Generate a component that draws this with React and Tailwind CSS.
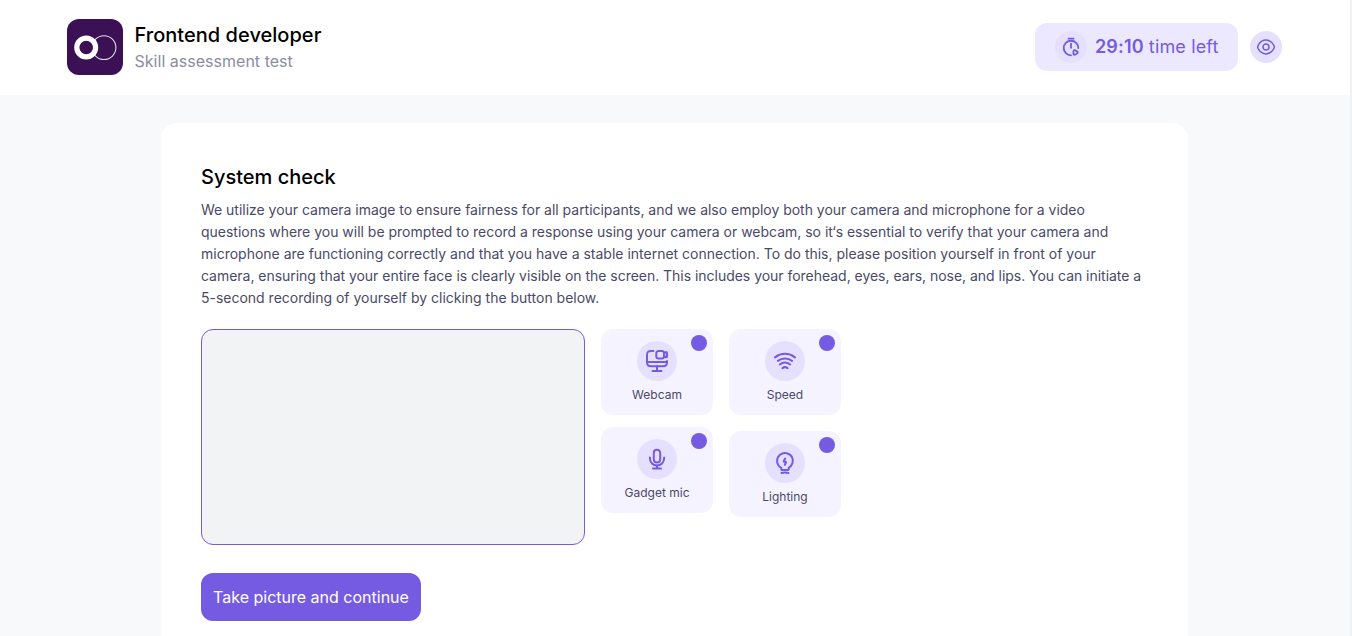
import React from "react";

const stroke = {
  fill: "none",
  stroke: "#755AE2",
  strokeWidth: 2,
  strokeLinecap: "round",
  strokeLinejoin: "round",
};

function Logo() {
  return (
    <svg className="size-14 shrink-0 rounded-xl" viewBox="0 0 56 56">
      <rect width="56" height="56" fill="#3B1054" />
      <circle cx="37" cy="28.6" r="11.9" fill="none" stroke="#E4DCE8" strokeWidth="1.1" />
      <circle cx="19.2" cy="28.5" r="9.4" fill="#3B1054" stroke="#fff" strokeWidth="5.2" />
    </svg>
  );
}

function TimerIcon() {
  return (
    <svg width="20" height="20" viewBox="0 0 24 24" {...stroke} strokeWidth="2.2">
      <path d="M12 8v5" />
      <path d="M12 22c-4.83 0-8.75-3.92-8.75-8.75S7.17 4.5 12 4.5s8.75 3.92 8.75 8.75" />
      <path d="M9 2h6" />
      <path d="M14.9 18.5v-1.16c0-1.43 1.02-2.02 2.26-1.3l1 .58 1 .58c1.24.71 1.24 1.88 0 2.6l-1 .58-1 .58c-1.24.71-2.26.13-2.26-1.3V18.5z" />
    </svg>
  );
}

function EyeIcon() {
  return (
    <svg width="20" height="20" viewBox="0 0 24 24" {...stroke} strokeWidth="1.8">
      <path d="M15.58 12c0 1.98-1.6 3.58-3.58 3.58S8.42 13.98 8.42 12s1.6-3.58 3.58-3.58 3.58 1.6 3.58 3.58z" />
      <path d="M12 20.27c3.53 0 6.82-2.08 9.11-5.68.9-1.41.9-3.78 0-5.19-2.29-3.6-5.58-5.68-9.11-5.68-3.53 0-6.82 2.08-9.11 5.68-.9 1.41-.9 3.78 0 5.19 2.29 3.6 5.58 5.68 9.11 5.68z" />
    </svg>
  );
}

function WebcamIcon() {
  return (
    <svg width="24" height="24" viewBox="0 0 24 24" {...stroke}>
      <path d="M8.5 2H6.44C2.89 2 2 2.89 2 6.44v6.32c0 3.55.89 4.44 4.44 4.44h11.11c3.55 0 4.44-.89 4.44-4.44V12" />
      <path d="M12 17.22V22M2 13h20M7.5 22h9" />
      <path d="M16.86 9.5h-3.33c-1.66 0-2.22-1.11-2.22-2.22V4.22c0-1.22 1-2.22 2.22-2.22h3.33c1.22 0 2.22 1 2.22 2.22v3.06c0 1.22-.99 2.22-2.22 2.22z" />
      <path d="M20.6 8.1l-1.5-1.2V4.5l1.5-1.2c.8-.5 1.4-.2 1.4.8v3.2c0 1-.6 1.3-1.4.8z" />
    </svg>
  );
}

function WifiIcon() {
  return (
    <svg width="24" height="24" viewBox="0 0 24 24" {...stroke}>
      <path d="M4.91 11.84c4.21-3.26 9.97-3.26 14.18 0" />
      <path d="M2 8.36c6.06-4.68 13.94-4.68 20 0" />
      <path d="M6.79 15.49c3.09-2.39 7.32-2.39 10.41 0" />
      <path d="M9.4 19.15c1.54-1.19 3.66-1.19 5.2 0" />
    </svg>
  );
}

function MicIcon() {
  return (
    <svg width="24" height="24" viewBox="0 0 24 24" {...stroke}>
      <path d="M12 15.5c1.95 0 3.2-1.3 3.2-3.2V6c0-1.9-1.25-3.2-3.2-3.2S8.8 4.1 8.8 6v6.3c0 1.9 1.25 3.2 3.2 3.2z" />
      <path d="M4.9 10.4v.9C4.9 15.4 8 18.5 12 18.5s7.1-3.1 7.1-7.2v-.9" />
      <path d="M12 18.5v3M8 21.5h8" />
    </svg>
  );
}

function BulbIcon() {
  return (
    <svg width="24" height="24" viewBox="0 0 24 24" {...stroke}>
      <path d="M8.3 18.04v-1.16C6 15.49 4.11 12.78 4.11 9.9c0-4.95 4.55-8.83 9.69-7.71 2.26.5 4.24 2 5.27 4.07 2.09 4.2-.11 8.66-3.34 10.61v1.16c0 .29.11.96-.96.96H9.26c-1.1.01-.96-.42-.96-.99z" />
      <path d="M8.5 22c2.29-.65 4.71-.65 7 0" />
      <path d="M12.2 7.6l-1.3 2.2c-.3.5 0 1 .4 1h1.2c.5 0 .7.5.4 1l-1.1 2" />
    </svg>
  );
}

function CheckTile({ icon, label }) {
  return (
    <div className="relative flex h-[86px] w-28 flex-col items-center rounded-xl bg-[#F5F3FF] pt-3">
      <span className="absolute right-1.5 top-1.5 size-4 rounded-full bg-[#755AE2]" />
      <div className="flex size-10 items-center justify-center rounded-full bg-[#E6E0FF]">{icon}</div>
      <span className="mt-[6px] text-xs leading-4 text-[#4A4A68]">{label}</span>
    </div>
  );
}

export default function App() {
  return (
    <div className="flex h-[636px] w-full overflow-hidden bg-[#F8F9FB] font-['Inter',sans-serif]">
      <div className="flex min-w-0 flex-1 flex-col">
        <header className="flex h-[95px] shrink-0 items-center justify-between bg-white pl-[67px] pr-[68px] pb-px">
          <div className="flex items-center gap-[11.5px]">
            <Logo />
            <div>
              <h1 className="text-xl leading-7 font-medium tracking-[0.03px] text-black">Frontend developer</h1>
              <p className="text-base leading-6 tracking-[0.02px] text-[#8C8CA1]">Skill assessment test</p>
            </div>
          </div>
          <div className="flex items-center gap-3">
            <div className="flex h-12 w-[203px] items-center gap-2 rounded-xl bg-[#ECE8FF] pl-5">
              <div className="flex size-8 items-center justify-center rounded-full bg-[#E6E0FF]">
                <TimerIcon />
              </div>
              <p className="whitespace-nowrap text-lg tracking-[0.14px] text-[#755AE2]">
                <span className="font-semibold">29:10</span> time left
              </p>
            </div>
            <div className="flex size-8 items-center justify-center rounded-full bg-[#E6E0FF]">
              <EyeIcon />
            </div>
          </div>
        </header>
        <main className="ml-[161px] mt-7 w-[1027px] flex-1 rounded-t-[16px] bg-white px-10 pt-10">
          <h2 className="text-xl leading-7 font-medium text-black">System check</h2>
          <p className="mt-2 whitespace-nowrap text-sm leading-[22px] text-[#4A4A68]">
            <span className="tracking-[-0.022px]">We utilize your camera image to ensure fairness for all participants, and we also employ both your camera and microphone for a video</span>
            <br />
            <span className="tracking-[-0.014px]">questions where you will be prompted to record a response using your camera or webcam, so it‘s essential to verify that your camera and</span>
            <br />
            <span className="tracking-[-0.004px]">microphone are functioning correctly and that you have a stable internet connection. To do this, please position yourself in front of your</span>
            <br />
            <span className="tracking-[-0.028px]">camera, ensuring that your entire face is clearly visible on the screen. This includes your forehead, eyes, ears, nose, and lips. You can initiate a</span>
            <br />
            <span className="tracking-[-0.008px]">5-second recording of yourself by clicking the button below.</span>
          </p>
          <div className="mt-5 flex items-start gap-4">
            <div className="h-[216px] w-96 rounded-xl border border-[#755AE2] bg-[#F2F3F5]" />
            <div className="flex flex-col gap-3">
              <CheckTile icon={<WebcamIcon />} label="Webcam" />
              <CheckTile icon={<MicIcon />} label="Gadget mic" />
            </div>
            <div className="flex flex-col gap-4">
              <CheckTile icon={<WifiIcon />} label="Speed" />
              <CheckTile icon={<BulbIcon />} label="Lighting" />
            </div>
          </div>
          <button className="mt-7 h-12 w-[220px] whitespace-nowrap rounded-xl bg-[#755AE2] text-base text-white">
            Take picture and continue
          </button>
        </main>
      </div>
      <div className="w-0.5 shrink-0 bg-[#F1F1F1]" />
    </div>
  );
}
